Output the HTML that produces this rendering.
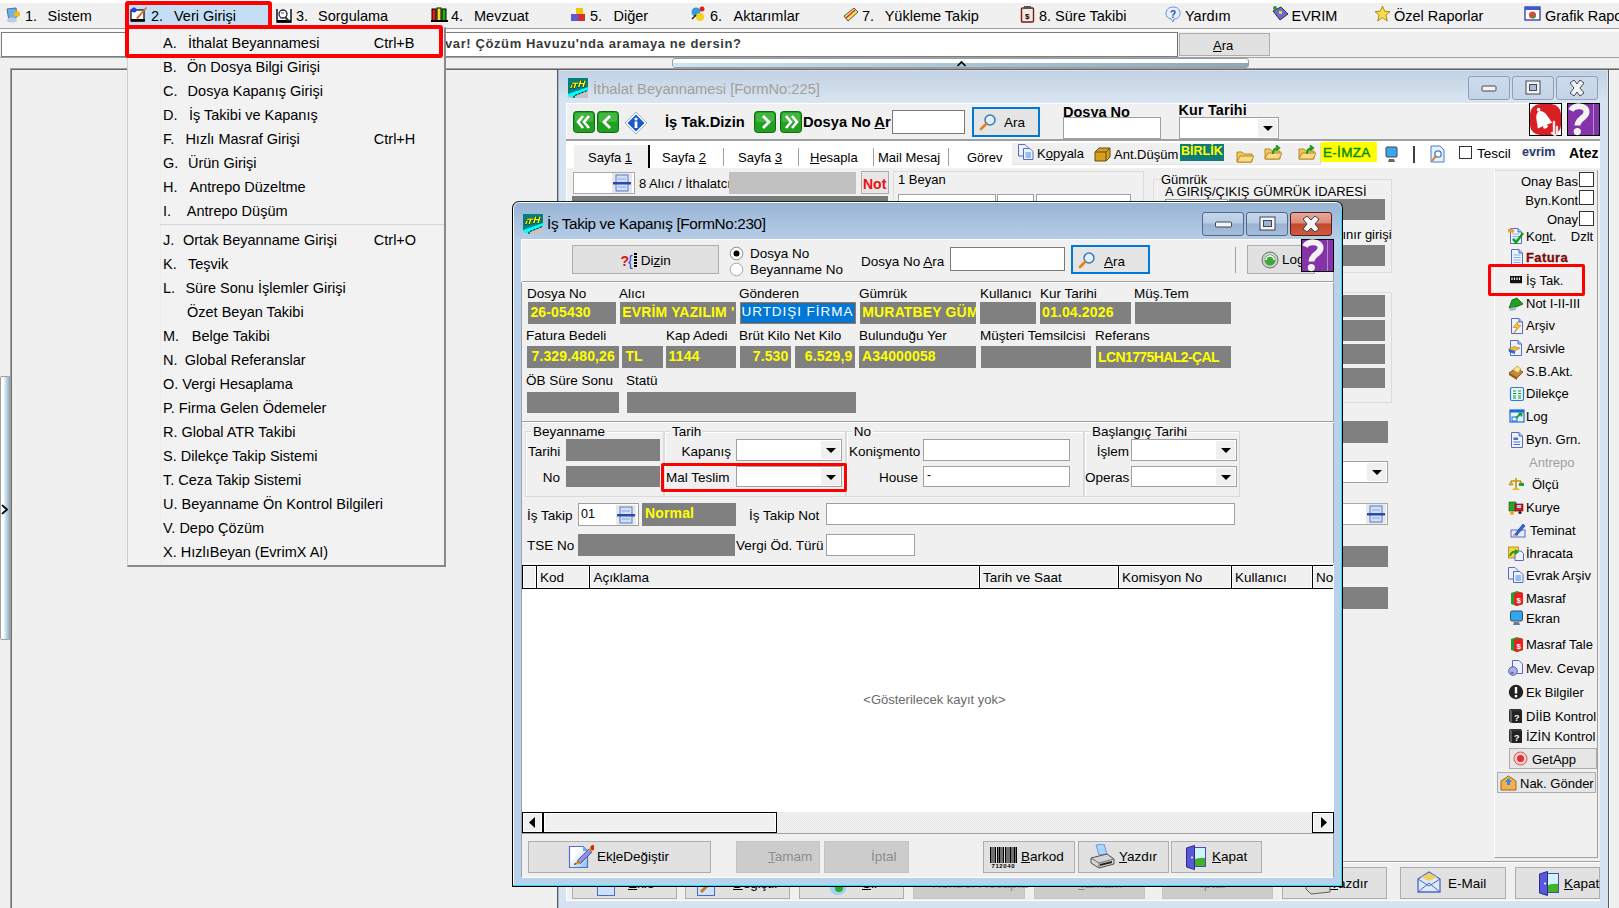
<!DOCTYPE html>
<html><head><meta charset="utf-8">
<style>
*{margin:0;padding:0;box-sizing:border-box}
html,body{width:1619px;height:908px;overflow:hidden;background:#f0f0f0;font-family:"Liberation Sans",sans-serif;color:#000}
.a{position:absolute}
.t{position:absolute;white-space:nowrap;line-height:1}
.m{font-size:14.5px}
.s{font-size:13px}
.gf{position:absolute;background:#808080}
.yb{position:absolute;white-space:nowrap;line-height:1;color:#ffff00;font-weight:bold;font-size:13px}
.in{position:absolute;background:#fff;border:1px solid #7a7a7a}
.btn{position:absolute;background:#e1e1e1;border:1px solid #adadad}
.red{position:absolute;border:4px solid #ff0000;border-radius:3px}
u{text-decoration:underline}
</style></head><body>
<!-- ===== MENU BAR ===== -->
<div class="a" style="left:0;top:0;width:1619px;height:3px;background:#ffffff"></div>
<div class="a" style="left:0;top:28px;width:1619px;height:1px;background:#a0a0a0"></div>
<div class="a" style="left:0;top:29px;width:1619px;height:3px;background:#fafafa"></div>
<div class="a" style="left:128px;top:5px;width:140px;height:20px;background:#c4dff5"></div>
<svg class="a" style="left:5px;top:7px" width="16" height="16"><path d="M2 2 L11 1 L12 10 L4 14 Z" fill="#6fb0e8" stroke="#4a6fa0" stroke-width="1"/><ellipse cx="7" cy="13" rx="5" ry="2.5" fill="#c0c8e8"/><circle cx="12" cy="7" r="3" fill="#f7b81a"/></svg>
<div class="t" style="left:25px;top:9.23px;font-size:14.5px;">1.</div>
<div class="t" style="left:47.5px;top:9.23px;font-size:14.5px;">Sistem</div>
<svg class="a" style="left:130px;top:6px" width="18" height="17"><rect x="1" y="4" width="13" height="11" fill="#fff" stroke="#000" stroke-width="1.2"/><rect x="1" y="13" width="14" height="2.5" fill="#000"/><circle cx="4" cy="4" r="2.5" fill="#2244dd"/><path d="M6 12 L16 1 L17 2 L8 13 Z" fill="#d86a2a"/></svg>
<div class="t" style="left:151px;top:9.23px;font-size:14.5px;">2.</div>
<div class="t" style="left:174px;top:9.23px;font-size:14.5px;">Veri Girişi</div>
<svg class="a" style="left:276px;top:7px" width="16" height="16"><path d="M1 2 V15 H15 V2" fill="#fff" stroke="#000" stroke-width="1.4"/><rect x="1" y="13" width="14" height="2.5" fill="#000"/><circle cx="7" cy="7" r="4" fill="none" stroke="#222" stroke-width="1.3"/><path d="M9 10 L13 14" stroke="#333" stroke-width="2"/><path d="M5 6 h3 M4 11 h4" stroke="#7a2bd0" stroke-width="1.2"/></svg>
<div class="t" style="left:296px;top:9.23px;font-size:14.5px;">3.</div>
<div class="t" style="left:318px;top:9.23px;font-size:14.5px;">Sorgulama</div>
<svg class="a" style="left:431px;top:6px" width="17" height="17"><rect x="1" y="3" width="4" height="12" fill="#e02020" stroke="#000" stroke-width="1"/><rect x="6" y="2" width="4" height="13" fill="#f0e020" stroke="#000" stroke-width="1"/><rect x="11" y="3" width="4" height="12" fill="#20b020" stroke="#000" stroke-width="1"/><rect x="0" y="14" width="17" height="2" fill="#000"/></svg>
<div class="t" style="left:451px;top:9.23px;font-size:14.5px;">4.</div>
<div class="t" style="left:474px;top:9.23px;font-size:14.5px;">Mevzuat</div>
<svg class="a" style="left:570px;top:6px" width="16" height="17"><rect x="6" y="2" width="7" height="7" fill="#f5c400"/><rect x="1" y="8" width="7" height="7" fill="#5b5bd6"/><rect x="8" y="8" width="7" height="7" fill="#d03030"/></svg>
<div class="t" style="left:590px;top:9.23px;font-size:14.5px;">5.</div>
<div class="t" style="left:613.5px;top:9.23px;font-size:14.5px;">Diğer</div>
<svg class="a" style="left:690px;top:5px" width="16" height="18"><circle cx="6" cy="7" r="4.5" fill="#3a9ad9"/><circle cx="10" cy="12" r="4" fill="#f2d31b"/><circle cx="12" cy="4" r="2.5" fill="#e02020"/><path d="M2 14 L6 10" stroke="#222" stroke-width="1.5"/></svg>
<div class="t" style="left:710px;top:9.23px;font-size:14.5px;">6.</div>
<div class="t" style="left:733.5px;top:9.23px;font-size:14.5px;">Aktarımlar</div>
<svg class="a" style="left:842px;top:6px" width="17" height="17"><path d="M2 10 L12 2 L16 6 L6 15 Z" fill="#f0e060" stroke="#555" stroke-width="1"/><path d="M4 12 L13 4" stroke="#e03030" stroke-width="1.5"/></svg>
<div class="t" style="left:862px;top:9.23px;font-size:14.5px;">7.</div>
<div class="t" style="left:884.7px;top:9.23px;font-size:14.5px;">Yükleme Takip</div>
<svg class="a" style="left:1020px;top:5px" width="15" height="18"><rect x="1.5" y="3" width="12" height="14" rx="1" fill="#f4e9e0" stroke="#7a1a1a" stroke-width="1.4"/><rect x="4" y="1" width="7" height="3" fill="#555"/><text x="5" y="14" font-size="8" font-family="Liberation Sans" font-weight="bold">$</text></svg>
<div class="t" style="left:1039px;top:9.23px;font-size:14.5px;">8. Süre Takibi</div>
<svg class="a" style="left:1165px;top:6px" width="16" height="17"><path d="M8 1 C13 1 15 4 15 7.5 C15 11 12 13 9 13 L8 16 L6 13 C3 12.5 1 10.5 1 7.5 C1 4 3.5 1 8 1Z" fill="#e6f0fc" stroke="#6a8fd0" stroke-width="1"/><text x="5" y="11.5" font-size="10" font-weight="bold" fill="#1a4ab8" font-family="Liberation Sans">?</text></svg>
<div class="t" style="left:1185px;top:9.23px;font-size:14.5px;">Yardım</div>
<svg class="a" style="left:1271px;top:5px" width="18" height="18"><path d="M2 6 L10 2 L17 9 L9 15 Z" fill="#6a6ad8" stroke="#333" stroke-width="1"/><circle cx="4" cy="3" r="2" fill="#2a9a2a"/><rect x="8" y="6" width="3" height="3" fill="#f2d31b"/></svg>
<div class="t" style="left:1291.5px;top:9.23px;font-size:14.5px;">EVRIM</div>
<svg class="a" style="left:1374px;top:5px" width="17" height="17"><path d="M8.5 1 L10.7 6.3 L16 6.6 L11.8 10 L13.3 16 L8.5 12.6 L3.7 16 L5.2 10 L1 6.6 L6.3 6.3 Z" fill="#f9e04a" stroke="#b08a10" stroke-width="1"/></svg>
<div class="t" style="left:1394px;top:9.23px;font-size:14.5px;">Özel Raporlar</div>
<svg class="a" style="left:1524px;top:6px" width="17" height="16"><rect x="1" y="1" width="15" height="13" fill="#fff" stroke="#2a3aa0" stroke-width="1.3"/><rect x="1" y="1" width="15" height="3" fill="#3a5ad0"/><circle cx="8.5" cy="9" r="3.5" fill="#e84040"/><path d="M8.5 9 L12 9 A3.5 3.5 0 0 1 8.5 12.5Z" fill="#30a030"/></svg>
<div class="t" style="left:1545px;top:9.23px;font-size:14.5px;">Grafik Raporlar</div>
<div class="red" style="left:125px;top:1px;width:147px;height:28px"></div>
<!-- ===== SEARCH ROW ===== -->
<div class="a" style="left:1px;top:32px;width:1177px;height:25px;background:#fff;border:1px solid #7d7d7d;border-right-color:#6d6d6d"></div>
<div class="t" style="left:445px;top:37px;font-size:13px;font-weight:bold;color:#3a3a3a;letter-spacing:0.6px">var! Çözüm Havuzu'nda aramaya ne dersin?</div>
<div class="btn" style="left:1179px;top:33px;width:91px;height:23px"></div>
<div class="t s" style="left:1213px;top:39px"><u>A</u>ra</div>
<div class="a" style="left:0;top:57px;width:1619px;height:1px;background:#a0a0a0"></div>
<!-- splitter -->
<div class="a" style="left:672px;top:58px;width:577px;height:10px;border:1px solid #9c9c9c;border-radius:3px;background:#fff"></div>
<div class="a" style="left:673px;top:63px;width:575px;height:4px;background:linear-gradient(90deg,#cde4f2,#a9c4d4 50%,#8ea8b8)"></div>
<svg class="a" style="left:956px;top:60px" width="11" height="7"><path d="M1.5 6 L5.5 2 L9.5 6" stroke="#000" stroke-width="1.6" fill="none"/></svg>
<div class="a" style="left:10px;top:68px;width:1609px;height:1px;background:#a0a0a0"></div>
<div class="a" style="left:10px;top:69px;width:1609px;height:1px;background:#686868"></div>
<!-- left panel -->
<div class="a" style="left:10px;top:69px;width:1px;height:839px;background:#a0a0a0"></div>
<div class="a" style="left:11px;top:69px;width:1px;height:839px;background:#6e6e6e"></div>
<!-- collapsed left strip -->
<div class="a" style="left:0;top:376px;width:11px;height:264px;border:1px solid #a0a0a0;border-right-width:2px;border-radius:2px;background:linear-gradient(90deg,#ffffff 0,#ffffff 40%,#d6ecf8 45%,#9ab8c8 100%)"></div>
<svg class="a" style="left:0;top:503px" width="10" height="13"><path d="M2.6 2.6 L7 6.5 L2.6 10.4" stroke="#000" stroke-width="1.9" fill="none" stroke-linecap="round"/></svg>
<!-- MDI left border -->
<div class="a" style="left:557px;top:69px;width:1px;height:839px;background:#5a5a5a"></div>
<div class="a" style="left:1608px;top:69px;width:1px;height:839px;background:#5a5a5a"></div>
<div class="a" style="left:1609px;top:70px;width:10px;height:838px;background:#f0f0f0;border-left:1px solid #fafafa"></div>

<div class="a" style="left:558px;top:70px;width:1050px;height:838px;background:#d6e3f0;border-left:1px solid #a9b9cb"></div>
<div class="a" style="left:559px;top:71px;width:1048px;height:32px;background:linear-gradient(#c2d2e3,#d9e5f1)"></div>
<svg class="a" style="left:568px;top:78px" width="20" height="20"><rect width="20" height="20" fill="#008080"/><path d="M0 16 L20 9 V13.5 L6 18 V20 H0Z" fill="#00ffff"/><path d="M6 20 V18 L20 12.5 V20Z" fill="#c4c4c4"/><path d="M0 18 L6 20 H0Z" fill="#d8c0c0"/><path d="M6 20 V17.8 L20 12.3" stroke="#000" stroke-width="1" fill="none" stroke-dasharray="2.2 1.2"/><g fill="#ffff00" stroke="#000" stroke-width="0.7" paint-order="stroke"><path d="M2 10 L3.5 6.5 L5 6.5 L3.5 10Z"/><path d="M4 4.5 H11 L10.5 5.8 H8.3 L7 10 H5.4 L6.7 5.8 H3.6Z"/><path d="M12 2.5 H13.6 L12.8 5 H15.5 L16.3 2.5 H17.9 L15.8 9 H14.2 L15 6.3 H12.3 L11.5 9 H9.9Z"/></g></svg>
<div class="t" style="left:593px;top:82.16px;font-size:14.7px;color:#a3a09b">İthalat Beyannamesi [FormNo:225]</div>
<div class="a" style="left:1468px;top:76px;width:42px;height:24px;background:linear-gradient(#cddbeb,#c4d4e6);border:1px solid #8f9fb8;border-radius:3px"></div><svg class="a" style="left:1479.0px;top:82.0px" width="20" height="12"><rect x="3" y="4" width="14" height="5" rx="1" fill="#f4f4f4" stroke="#404a5a" stroke-width="1"/></svg>
<div class="a" style="left:1512px;top:76px;width:42px;height:24px;background:linear-gradient(#cddbeb,#c4d4e6);border:1px solid #8f9fb8;border-radius:3px"></div><svg class="a" style="left:1523.0px;top:79.0px" width="20" height="18"><rect x="3" y="2" width="14" height="13" fill="#f4f4f4" stroke="#404a5a" stroke-width="1"/><rect x="6.5" y="5.5" width="7" height="6" fill="#a8bcd6" stroke="#404a5a" stroke-width="1"/></svg>
<div class="a" style="left:1556px;top:76px;width:42px;height:24px;background:linear-gradient(#cddbeb,#c4d4e6);border:1px solid #8f9fb8;border-radius:3px"></div><svg class="a" style="left:1567.0px;top:79.0px" width="20" height="18"><path d="M3 4 L7 1 L10 5 L13 1 L17 4 L13 9 L17 14 L13 17 L10 13 L7 17 L3 14 L7 9Z" fill="#f4f4f4" stroke="#404a5a" stroke-width="1" stroke-linejoin="round"/></svg>
<div class="a" style="left:566px;top:103px;width:1034px;height:798px;background:#f0f0f0;border-top:1px solid #ffffff;border-left:1px solid #ffffff;border-bottom:1px solid #ffffff"></div>
<svg class="a" style="left:573px;top:111px" width="22" height="22"><rect x="0.5" y="0.5" width="21" height="21" rx="3" fill="#22a022" stroke="#0c6a0c"/><rect x="2" y="2" width="18" height="9" rx="2" fill="#5cc85c" opacity="0.55"/><path d="M10 5 L5 11 L10 17 M16 5 L11 11 L16 17" stroke="#fff" stroke-width="2.6" fill="none"/></svg>
<svg class="a" style="left:597px;top:111px" width="22" height="22"><rect x="0.5" y="0.5" width="21" height="21" rx="3" fill="#22a022" stroke="#0c6a0c"/><rect x="2" y="2" width="18" height="9" rx="2" fill="#5cc85c" opacity="0.55"/><path d="M13 5 L7 11 L13 17" stroke="#fff" stroke-width="2.8" fill="none"/></svg>
<svg class="a" style="left:624px;top:111px" width="24" height="24"><path d="M12 1 L23 12 L12 23 L1 12Z" fill="#fff" stroke="#9ab0d8"/><path d="M12 3.5 L20.5 12 L12 20.5 L3.5 12Z" fill="#1a5ac8"/><circle cx="12" cy="8" r="1.6" fill="#fff"/><rect x="10.6" y="10.5" width="2.8" height="6.5" fill="#fff"/></svg>
<div class="t" style="left:665px;top:115.36px;font-size:14.7px;font-weight:bold">İş Tak.Dizin</div>
<svg class="a" style="left:754px;top:111px" width="22" height="22"><rect x="0.5" y="0.5" width="21" height="21" rx="3" fill="#22a022" stroke="#0c6a0c"/><rect x="2" y="2" width="18" height="9" rx="2" fill="#5cc85c" opacity="0.55"/><path d="M9 5 L15 11 L9 17" stroke="#fff" stroke-width="2.8" fill="none"/></svg>
<svg class="a" style="left:780px;top:111px" width="22" height="22"><rect x="0.5" y="0.5" width="21" height="21" rx="3" fill="#22a022" stroke="#0c6a0c"/><rect x="2" y="2" width="18" height="9" rx="2" fill="#5cc85c" opacity="0.55"/><path d="M6 5 L11 11 L6 17 M12 5 L17 11 L12 17" stroke="#fff" stroke-width="2.6" fill="none"/></svg>
<div class="t" style="left:803px;top:115.36px;font-size:14.7px;font-weight:bold">Dosya No <u>A</u>r</div>
<div class="a" style="left:892px;top:110px;width:73px;height:24px;background:#fff;border:1px solid #7a7a7a;"></div>
<div class="a" style="left:972px;top:107px;width:68px;height:30px;background:#e5e5e5;border:2px solid #0078d7"></div>
<svg class="a" style="left:979px;top:113px" width="18" height="18"><circle cx="11" cy="7" r="5" fill="#dff0ff" stroke="#3a78b8" stroke-width="1.5"/><path d="M7.5 10.5 L2 16" stroke="#e08020" stroke-width="2.6" stroke-linecap="round"/></svg>
<div class="t" style="left:1004px;top:115.57px;font-size:13.5px;">Ara</div>
<div class="t" style="left:1063px;top:105.23px;font-size:14.5px;font-weight:bold">Dosya No</div>
<div class="a" style="left:1063px;top:117px;width:98px;height:22px;background:#fff;border:1px solid #7a7a7a;border-color:#a0a0a0"></div>
<div class="t" style="left:1178.5px;top:103.20px;font-size:14.3px;font-weight:bold;letter-spacing:0.2px">Kur Tarihi</div>
<div class="a" style="left:1179px;top:117px;width:100px;height:22px;background:#fff;border:1px solid #7a7a7a;border-color:#a0a0a0"></div><div class="a" style="left:1258px;top:119px;width:19px;height:18px;background:#f0f0f0"></div><svg class="a" style="left:1261.5px;top:125.0px" width="12" height="7"><path d="M1 1 H11 L6 6Z" fill="#000"/></svg>
<svg class="a" style="left:1529px;top:103px" width="33" height="33"><rect x="0.5" y="0.5" width="32" height="32" fill="#fff" stroke="#000"/><rect x="1" y="1" width="31" height="31" rx="10" fill="#d82024"/><g transform="rotate(-22 13 15)"><path d="M5 23 C7.5 19 6 9 13 7.5 C20 9 18.5 19 21 23Z" fill="#fff"/><circle cx="13" cy="6" r="1.8" fill="#fff"/><ellipse cx="13" cy="24.5" rx="2.6" ry="1.6" fill="#fff"/></g><path d="M25 19 V30 M28 24 V31 M23 30 L26 32" stroke="#f6e4e4" stroke-width="2.4" stroke-linecap="round"/></svg>
<svg class="a" style="left:1567px;top:103px" width="33" height="33"><rect x="0.5" y="0.5" width="32" height="32" fill="#8434a8" stroke="#000"/><path d="M26.5 1 V32" stroke="#b58ad0" stroke-width="1"/><path d="M4 7.5 C6.5 2 19.5 1.5 19.5 9 C19.5 15 10.5 15.5 10.5 22.5" stroke="#f2f2f2" stroke-width="6" fill="none"/><circle cx="10.3" cy="28.6" r="3.6" fill="#f2f2f2"/></svg>
<div class="a" style="left:566px;top:139px;width:1034px;height:2px;background:#a0a0a0"></div>
<div class="a" style="left:567px;top:141px;width:1033px;height:27px;background:#ffffff"></div>
<div class="a" style="left:574px;top:145px;width:75px;height:23px;background:#f0f0f0"></div>
<div class="a" style="left:648px;top:145px;width:2px;height:23px;background:#000"></div>
<div class="a" style="left:723px;top:148px;width:1px;height:18px;background:#a0a0a0"></div>
<div class="a" style="left:798px;top:148px;width:1px;height:18px;background:#a0a0a0"></div>
<div class="a" style="left:873px;top:148px;width:1px;height:18px;background:#a0a0a0"></div>
<div class="a" style="left:948px;top:148px;width:1px;height:18px;background:#a0a0a0"></div>
<div class="t" style="left:588px;top:150.90px;font-size:13px;">Sayfa <u>1</u></div>
<div class="t" style="left:662px;top:150.90px;font-size:13px;">Sayfa <u>2</u></div>
<div class="t" style="left:738px;top:150.90px;font-size:13px;">Sayfa <u>3</u></div>
<div class="t" style="left:810px;top:150.90px;font-size:13px;"><u>H</u>esapla</div>
<div class="t" style="left:878px;top:150.90px;font-size:13px;">Mail Mesaj</div>
<div class="t" style="left:967px;top:150.90px;font-size:13px;">Görev</div>
<div class="a" style="left:1012px;top:143px;width:309px;height:22px;background:#f0f0f0;border-right:1px solid #dcdcdc;border-bottom:1px solid #e4e4e4"></div>
<svg class="a" style="left:1018px;top:144px" width="16" height="16"><path d="M0.5 0.5 H7 L10 3.5 V12 H0.5Z" fill="#eaf3ff" stroke="#5a6ac0"/><path d="M5.5 4.5 H12 L15 7.5 V15.5 H5.5Z" fill="#eaf3ff" stroke="#5a6ac0"/><path d="M7.5 9 H13 M7.5 11 H13 M7.5 13 H13" stroke="#3a8ae0"/></svg>
<div class="t" style="left:1037px;top:146.50px;font-size:13px;">K<u>o</u>pyala</div>
<svg class="a" style="left:1094px;top:147px" width="17" height="15"><path d="M1 5 L5 1 H16 V10 L12 14 H1Z" fill="#d4a020" stroke="#6a4a10"/><path d="M1 5 H12 V14 M12 5 L16 1" stroke="#6a4a10" fill="none"/></svg>
<div class="t" style="left:1114px;top:148.00px;font-size:13px;">Ant.Düşüm</div>
<div class="a" style="left:1180px;top:144px;width:44px;height:17px;background:#0e7a7a"></div>
<div class="t" style="left:1181px;top:145.42px;font-size:12.5px;font-weight:bold;color:#ffff00">BİRLİK</div>
<svg class="a" style="left:1236px;top:148px" width="18" height="16"><path d="M1 4 H6 L8 6 H16 V14 H1Z" fill="#f2c65a" stroke="#b88a20"/><path d="M1 14 L4 8 H18 L15 14Z" fill="#fadc88" stroke="#b88a20"/></svg>
<svg class="a" style="left:1264px;top:145px" width="18" height="16"><path d="M1 4 H6 L8 6 H16 V14 H1Z" fill="#f2c65a" stroke="#b88a20"/><path d="M1 14 L4 8 H18 L15 14Z" fill="#fadc88" stroke="#b88a20"/><path d="M9 9 C9 5 11 3 14 3 M12 0.5 L15 3 L12 5.5" stroke="#1a9a1a" stroke-width="2" fill="none"/></svg>
<svg class="a" style="left:1298px;top:145px" width="18" height="16"><path d="M1 4 H6 L8 6 H16 V14 H1Z" fill="#f2c65a" stroke="#b88a20"/><path d="M1 14 L4 8 H18 L15 14Z" fill="#fadc88" stroke="#b88a20"/><path d="M9 9 C9 5 11 3 14 3 M12 0.5 L15 3 L12 5.5" stroke="#1a9a1a" stroke-width="2" fill="none"/></svg>
<div class="a" style="left:1321px;top:142px;width:56px;height:20px;background:#ffff00"></div>
<div class="t" style="left:1323px;top:146.07px;font-size:13.5px;color:#0a8a0a;-webkit-text-stroke:0.4px #0a8a0a;letter-spacing:0.3px">E-İMZA</div>
<svg class="a" style="left:1385px;top:146px" width="13" height="17"><rect x="1" y="1" width="11" height="10" rx="1" fill="#3aa8ee" stroke="#444"/><path d="M4 13 H9 L10 16 H3Z" fill="#666"/></svg>
<div class="a" style="left:1413px;top:146px;width:2px;height:17px;background:#404040"></div>
<svg class="a" style="left:1430px;top:145px" width="15" height="18"><path d="M1 1 H10 L14 5 V17 H1Z" fill="#e8f0ff" stroke="#4a7ac8"/><circle cx="8" cy="9" r="3.2" fill="#fff" stroke="#4a7ac8" stroke-width="1.3"/><path d="M5.5 11.5 L2 16" stroke="#e07a20" stroke-width="2"/></svg>
<div class="a" style="left:1459px;top:146px;width:13px;height:13px;background:#fff;border:1px solid #333"></div>
<div class="t" style="left:1477px;top:146.57px;font-size:13.5px;">Tescil</div>
<div class="a" style="left:1520px;top:146px;width:37px;height:13px;background:#f8f8f8"></div>
<div class="t" style="left:1522px;top:145.92px;font-size:12.5px;font-weight:bold;color:#2a3a6a">evrim</div>
<div class="t" style="left:1569px;top:146.15px;font-size:14px;font-weight:bold">Atez</div>
<div class="a" style="left:573px;top:172px;width:62px;height:22px;background:#fff;border:1px solid #7a7a7a;border-color:#a8a8a8"></div>
<svg class="a" style="left:612px;top:173px" width="20" height="20"><rect x="0" y="0" width="20" height="20" fill="#e8e8e8"/><rect x="4" y="2" width="12" height="16" fill="#cfe0f8" stroke="#5a78c8" stroke-width="1"/><path d="M6 6 H14 M6 14 H14" stroke="#8aa6e0" stroke-width="1"/><rect x="1" y="9" width="18" height="2.5" fill="#2a4aa8"/></svg>
<div class="t" style="left:639px;top:176.80px;font-size:13px;">8 Alıcı / İthalatcı</div>
<div class="a" style="left:729px;top:172px;width:127px;height:22px;background:#c0c0c0"></div>
<div class="a" style="left:861px;top:171px;width:28px;height:23px;background:#e1e1e1;border:1px solid #adadad;background:#e6e6e6"></div>
<div class="t" style="left:863px;top:177.15px;font-size:14px;font-weight:bold;color:#ee1111">Not</div>
<div class="a" style="left:572px;top:196px;width:316px;height:8px;background:#7a7a7a"></div>
<div class="a" style="left:893px;top:171px;width:251px;height:33px;border:1px solid #dcdcdc;border-bottom:none"></div>
<div class="t" style="left:898px;top:172.50px;font-size:13px;">1 Beyan</div>
<div class="a" style="left:898px;top:194px;width:98px;height:16px;background:#fff;border:1px solid #7a7a7a;border-color:#a0a0a0"></div>
<div class="a" style="left:997px;top:194px;width:37px;height:16px;background:#fff;border:1px solid #7a7a7a;border-color:#a0a0a0"></div>
<div class="a" style="left:1036px;top:194px;width:95px;height:16px;background:#fff;border:1px solid #7a7a7a;border-color:#a0a0a0"></div>
<div class="a" style="left:1153px;top:179px;width:239px;height:94px;border:1px solid #dcdcdc"></div>
<div class="t" style="left:1161px;top:172.50px;font-size:13px;background:#f0f0f0;padding-right:2px">Gümrük</div>
<div class="t" style="left:1165px;top:185.00px;font-size:13px;">A GIRIŞ/ÇIKIŞ GÜMRÜK İDARESİ</div>
<div class="a" style="left:1165px;top:199px;width:63px;height:21px;background:#fff;border:1px solid #7a7a7a;border-color:#a0a0a0"></div>
<div class="a" style="left:1229px;top:199px;width:156px;height:21px;background:#808080"></div>
<div class="t" style="left:1336px;top:228.00px;font-size:13px;">sınır girişi</div>
<div class="a" style="left:1335px;top:245px;width:50px;height:21px;background:#808080"></div>
<div class="a" style="left:1335px;top:292px;width:57px;height:111px;border:1px solid #dcdcdc"></div>
<div class="a" style="left:1335px;top:295px;width:50px;height:22px;background:#808080"></div>
<div class="a" style="left:1335px;top:320px;width:50px;height:21px;background:#808080"></div>
<div class="a" style="left:1335px;top:344px;width:50px;height:20px;background:#808080"></div>
<div class="a" style="left:1335px;top:368px;width:50px;height:20px;background:#808080"></div>
<div class="a" style="left:1335px;top:421px;width:53px;height:22px;background:#808080"></div>
<div class="a" style="left:1300px;top:461px;width:88px;height:22px;background:#fff;border:1px solid #7a7a7a;border-color:#a0a0a0"></div><div class="a" style="left:1367px;top:463px;width:19px;height:18px;background:#f0f0f0"></div><svg class="a" style="left:1370.5px;top:469.0px" width="12" height="7"><path d="M1 1 H11 L6 6Z" fill="#000"/></svg>
<div class="a" style="left:1300px;top:503px;width:88px;height:22px;background:#fff;border:1px solid #7a7a7a;border-color:#a8a8a8"></div>
<svg class="a" style="left:1366px;top:504px" width="20" height="20"><rect x="0" y="0" width="20" height="20" fill="#e8e8e8"/><rect x="4" y="2" width="12" height="16" fill="#cfe0f8" stroke="#5a78c8" stroke-width="1"/><path d="M6 6 H14 M6 14 H14" stroke="#8aa6e0" stroke-width="1"/><rect x="1" y="9" width="18" height="2.5" fill="#2a4aa8"/></svg>
<div class="a" style="left:1335px;top:546px;width:53px;height:21px;background:#808080"></div>
<div class="a" style="left:1335px;top:587px;width:53px;height:22px;background:#808080"></div>
<div class="a" style="left:1494px;top:170px;width:104px;height:688px;border-left:1px solid #ffffff;border-top:1px solid #dcdcdc;border-bottom:1px solid #a0a0a0;border-right:1px solid #a0a0a0"></div>
<div class="t" style="right:41px;top:175.40px;font-size:13px;">Onay Bas</div>
<div class="a" style="left:1579px;top:172px;width:15px;height:15px;background:#fff;border:1px solid #333"></div>
<div class="t" style="right:41px;top:193.60px;font-size:13px;">Byn.Kont</div>
<div class="a" style="left:1579px;top:190px;width:15px;height:15px;background:#fff;border:1px solid #333"></div>
<div class="t" style="right:41px;top:213.40px;font-size:13px;">Onay</div>
<div class="a" style="left:1579px;top:211px;width:15px;height:15px;background:#fff;border:1px solid #333"></div>
<svg class="a" style="left:1508px;top:228px" width="16" height="16"><path d="M2.5 0.5 H10 L13.5 4 V15.5 H2.5Z" fill="#eaf3ff" stroke="#5a6ac0"/><path d="M10 0.5 V4 H13.5" fill="#9cc8f0" stroke="#5a6ac0"/><path d="M4.5 6 H11 M4.5 8.5 H11 M4.5 11 H9" stroke="#8ab0e0"/><path d="M5 11 L8 14.5 L15 5" stroke="#10a010" stroke-width="2.4" fill="none"/><path d="M0 1 L4 1 L4 0 L6.5 3 L4 6 V4.5 H0Z" fill="#f0a030"/></svg>
<div class="t" style="left:1526px;top:230.00px;font-size:13px;">Ko<u>n</u>t. &nbsp;&nbsp;&nbsp;Dzlt</div>
<svg class="a" style="left:1509px;top:249px" width="16" height="16"><path d="M2.5 0.5 H10 L13.5 4 V15.5 H2.5Z" fill="#eaf3ff" stroke="#5a6ac0"/><path d="M10 0.5 V4 H13.5" fill="#9cc8f0" stroke="#5a6ac0"/><path d="M4.5 6 H11.5 M4.5 8.5 H11.5 M4.5 11 H11.5 M4.5 13.5 H11.5" stroke="#8ab0e0"/></svg>
<div class="t" style="left:1526px;top:250.70px;font-size:13px;font-weight:bold;color:#7a0a0a;letter-spacing:0.4px;-webkit-text-stroke:0.3px #7a0a0a">Fatura</div>
<svg class="a" style="left:1509px;top:272px" width="16" height="16"><rect x="1" y="4" width="12" height="7" fill="#111"/><path d="M3 5.5 V8 M5.5 5.5 V8 M8 5.5 V8 M10.5 5.5 V8" stroke="#fff" stroke-width="1.2"/><path d="M2 11.5 H13" stroke="#bbb"/></svg>
<div class="t" style="left:1526px;top:273.80px;font-size:13px;">İş Tak.</div>
<svg class="a" style="left:1508px;top:296px" width="16" height="16"><path d="M1 12 L4 4 L9 2 L15 8 L8 11Z" fill="#20a020" stroke="#0a5a0a" stroke-width="0.8"/><path d="M1 12 L2 15 L8 14 L8 11Z" fill="#a0b8d0"/></svg>
<div class="t" style="left:1526px;top:297.00px;font-size:13px;">Not I-II-III</div>
<svg class="a" style="left:1509px;top:318px" width="16" height="16"><path d="M2.5 0.5 H10 L13.5 4 V15.5 H2.5Z" fill="#eaf3ff" stroke="#5a6ac0"/><path d="M10 0.5 V4 H13.5" fill="#9cc8f0" stroke="#5a6ac0"/><path d="M9.5 3 L4 9.5 H8 L5 15 L12 7.5 H8.5Z" fill="#f8d020" stroke="#d07010" stroke-width="0.6"/></svg>
<div class="t" style="left:1526px;top:319.00px;font-size:13px;">Arşiv</div>
<svg class="a" style="left:1508px;top:340px" width="16" height="16"><path d="M2.5 0.5 H10 L13.5 4 V15.5 H2.5Z" fill="#eaf3ff" stroke="#5a6ac0"/><path d="M10 0.5 V4 H13.5" fill="#9cc8f0" stroke="#5a6ac0"/><path d="M0.5 9 L6 6.5 L12 8 L7 11Z" fill="#f4c030" stroke="#b08010" stroke-width="0.6"/><path d="M0.5 9 L7 11 V14 L1 12Z" fill="#2a6ad0"/></svg>
<div class="t" style="left:1526px;top:342.00px;font-size:13px;">Arsivle</div>
<svg class="a" style="left:1508px;top:364px" width="16" height="16"><path d="M1 9 L8 4 L15 8 L9 14Z" fill="#c88a30" stroke="#6a4010" stroke-width="0.8"/><path d="M5 6 L9 2 L13 5 L10 9Z" fill="#f8e890" stroke="#a08020" stroke-width="0.6"/><path d="M1 9 L9 14 V16 L1 11Z" fill="#8a5a20"/></svg>
<div class="t" style="left:1526px;top:365.00px;font-size:13px;">S.B.Akt.</div>
<svg class="a" style="left:1509px;top:386px" width="16" height="16"><rect x="1.5" y="1.5" width="13" height="13" rx="1.5" fill="#e8f4ff" stroke="#2a7ae0" stroke-width="1.2"/><path d="M4 5 H7 M9 5 H12 M4 7.5 H7 M9 7.5 H12 M4 10 H7 M9 10 H12 M4 12 H7 M9 12 H12" stroke="#10a010" stroke-width="1.1"/></svg>
<div class="t" style="left:1526px;top:387.40px;font-size:13px;">Dilekçe</div>
<svg class="a" style="left:1509px;top:408px" width="16" height="16"><rect x="1" y="2" width="14" height="12" fill="#e8f4ff" stroke="#1a6ae0" stroke-width="1.2"/><rect x="1" y="2" width="14" height="2.5" fill="#1a6ae0"/><rect x="3" y="9" width="5" height="4" fill="none" stroke="#1a6ae0"/><path d="M7 10 L12 5.5 M9.5 5.5 H12.5 V8.5" stroke="#10a030" stroke-width="1.8" fill="none"/></svg>
<div class="t" style="left:1526px;top:410.00px;font-size:13px;">Log</div>
<svg class="a" style="left:1509px;top:432px" width="16" height="16"><path d="M2.5 0.5 H10 L13.5 4 V15.5 H2.5Z" fill="#eaf3ff" stroke="#5a6ac0"/><path d="M10 0.5 V4 H13.5" fill="#9cc8f0" stroke="#5a6ac0"/><path d="M4.5 5.5 H9 V8 H4.5Z" fill="#5a6ac0"/><path d="M4.5 10 H11 M4.5 12.5 H11" stroke="#5a6ac0"/></svg>
<div class="t" style="left:1526px;top:433.00px;font-size:13px;">Byn. Grn.</div>
<div class="t" style="left:1529px;top:456.00px;font-size:13px;color:#a0a0a0">Antrepo</div>
<svg class="a" style="left:1508px;top:476px" width="16" height="16"><path d="M8 2 V13 M3 5 H13" stroke="#c89010" stroke-width="1.6"/><path d="M1 9 L3 5 L5 9Z M11 9 L13 5 L15 9Z" fill="#e8b830" stroke="#a07010" stroke-width="0.6"/><path d="M4 14 H12 L10 12 H6Z" fill="#e8b830"/><rect x="11" y="7" width="5" height="3" fill="#20a020"/></svg>
<div class="t" style="left:1532px;top:478.00px;font-size:13px;">Ölçü</div>
<svg class="a" style="left:1508px;top:499px" width="16" height="16"><rect x="1" y="3" width="7" height="9" fill="#30a030" stroke="#0a5a0a" stroke-width="0.6"/><rect x="7" y="5" width="8" height="7" fill="#d82020" stroke="#600" stroke-width="0.6"/><rect x="9" y="6" width="4" height="3" fill="#a0d0ff"/><circle cx="4" cy="14" r="2" fill="#f0a020"/><circle cx="12" cy="13.5" r="1.6" fill="#222"/></svg>
<div class="t" style="left:1526px;top:500.50px;font-size:13px;">Kurye</div>
<svg class="a" style="left:1510px;top:522px" width="16" height="16"><rect x="1" y="8" width="14" height="7" fill="#e0ecff" stroke="#5a6ac0"/><path d="M3 13 H8" stroke="#e04040"/><path d="M5 12 L13 2 L15 4 L7 13Z" fill="#2a6ae0" stroke="#0a2a80" stroke-width="0.6"/></svg>
<div class="t" style="left:1530px;top:523.50px;font-size:13px;">Teminat</div>
<svg class="a" style="left:1508px;top:545px" width="16" height="16"><rect x="0.5" y="2" width="10" height="11" fill="#f8d040" stroke="#b08010" stroke-width="0.8"/><path d="M7 6 H13 L15.5 8.5 V15.5 H7Z" fill="#eaf3ff" stroke="#5a6ac0"/><path d="M2 11 C3 7 6 6 9 7 M7 5 L9.5 7 L7 9" stroke="#10a010" stroke-width="1.8" fill="none"/></svg>
<div class="t" style="left:1526px;top:546.50px;font-size:13px;">İhracata</div>
<svg class="a" style="left:1508px;top:567px" width="16" height="16"><path d="M0.5 0.5 H7 L10 3.5 V12 H0.5Z" fill="#eaf3ff" stroke="#5a6ac0"/><path d="M5.5 4.5 H12 L15 7.5 V15.5 H5.5Z" fill="#eaf3ff" stroke="#5a6ac0"/><path d="M7.5 9 H13 M7.5 11 H13 M7.5 13 H13" stroke="#3a8ae0"/></svg>
<div class="t" style="left:1526px;top:568.50px;font-size:13px;">Evrak Arşiv</div>
<svg class="a" style="left:1509px;top:590px" width="16" height="16"><path d="M2 3 L8 1 L14 3 V14 L8 16 L2 14Z" fill="#20a030"/><path d="M5 3.5 L11 2 L14 3 V14 L8 16 L5 15Z" fill="#e82020"/><text x="7.5" y="12.5" font-family="Liberation Sans" font-size="8" font-weight="bold" fill="#fff">$</text></svg>
<div class="t" style="left:1526px;top:591.50px;font-size:13px;">Masraf</div>
<svg class="a" style="left:1509px;top:610px" width="16" height="16"><rect x="1.5" y="1" width="12" height="10" rx="1.5" fill="#30a8f0" stroke="#404a5a"/><path d="M5 12 H10 L11 15 H4Z" fill="#707a8a"/></svg>
<div class="t" style="left:1526px;top:611.50px;font-size:13px;">Ekran</div>
<svg class="a" style="left:1509px;top:636px" width="16" height="16"><path d="M2 3 L8 1 L14 3 V14 L8 16 L2 14Z" fill="#20a030"/><path d="M5 3.5 L11 2 L14 3 V14 L8 16 L5 15Z" fill="#e82020"/><text x="7.5" y="12.5" font-family="Liberation Sans" font-size="8" font-weight="bold" fill="#fff">$</text></svg>
<div class="t" style="left:1526px;top:637.50px;font-size:13px;">Masraf Tale</div>
<svg class="a" style="left:1508px;top:660px" width="16" height="16"><path d="M4.5 0.5 H11 L14.5 4 V13.5 H4.5Z" fill="#eaf3ff" stroke="#5a6ac0"/><circle cx="5" cy="11" r="4.3" fill="#b0b0e8" stroke="#5a5ab0"/><text x="2.5" y="13.5" font-family="Liberation Sans" font-size="6" font-weight="bold" fill="#3a3a90">»</text></svg>
<div class="t" style="left:1526px;top:661.50px;font-size:13px;">Mev. Cevap</div>
<svg class="a" style="left:1508px;top:684px" width="16" height="16"><circle cx="8" cy="8" r="7.2" fill="#222"/><rect x="6.8" y="3" width="2.4" height="6.5" fill="#fff"/><rect x="6.8" y="11" width="2.4" height="2.4" fill="#fff"/></svg>
<div class="t" style="left:1526px;top:685.50px;font-size:13px;">Ek Bilgiler</div>
<svg class="a" style="left:1508px;top:708px" width="16" height="16"><path d="M1 1 H13 L14 3 V15 H3 L1 13Z" fill="#333"/><path d="M1 1 L3 3 V15" stroke="#888" fill="none"/><rect x="4" y="3.5" width="10" height="11" fill="#222"/><text x="6" y="13" font-family="Liberation Sans" font-size="9" font-weight="bold" fill="#fff">?</text></svg>
<div class="t" style="left:1526px;top:709.50px;font-size:13px;">DİİB Kontrol</div>
<svg class="a" style="left:1508px;top:728px" width="16" height="16"><path d="M1 1 H13 L14 3 V15 H3 L1 13Z" fill="#333"/><path d="M1 1 L3 3 V15" stroke="#888" fill="none"/><rect x="4" y="3.5" width="10" height="11" fill="#222"/><text x="6" y="13" font-family="Liberation Sans" font-size="9" font-weight="bold" fill="#fff">?</text></svg>
<div class="t" style="left:1526px;top:729.50px;font-size:13px;">İZİN Kontrol</div>
<div class="a" style="left:1488px;top:264px;width:97px;height:32px;border:3px solid #ff0000;border-radius:2px"></div>
<div class="a" style="left:1509px;top:748px;width:88px;height:21px;background:#e1e1e1;border:1px solid #adadad;background:#e6e6e6"></div>
<svg class="a" style="left:1513px;top:751px" width="15" height="15"><circle cx="7.5" cy="7.5" r="6.5" fill="#f8d0d0" stroke="#e05050"/><circle cx="7.5" cy="7.5" r="3.5" fill="#e03030"/></svg>
<div class="t" style="left:1532px;top:752.50px;font-size:13px;">GetApp</div>
<div class="a" style="left:1497px;top:772px;width:99px;height:21px;background:#e1e1e1;border:1px solid #adadad;background:#e6e6e6"></div>
<svg class="a" style="left:1500px;top:774px" width="17" height="17"><path d="M1 7 L8.5 2 L16 7 V16 H1Z" fill="#f2b050" stroke="#a06a10"/><path d="M5 8 L8.5 4 L12 8 H10 V11 H7 V8Z" fill="#3a8ae0"/></svg>
<div class="t" style="left:1520px;top:777.00px;font-size:13px;">Nak. Gönder</div>
<div class="a" style="left:566px;top:861px;width:1034px;height:1px;background:#a0a0a0"></div>
<div class="a" style="left:566px;top:862px;width:1034px;height:1px;background:#ffffff"></div>
<div class="a" style="left:572px;top:867px;width:105px;height:32px;background:#e1e1e1;border:1px solid #adadad;"></div>
<div class="a" style="left:685px;top:867px;width:105px;height:32px;background:#e1e1e1;border:1px solid #adadad;"></div>
<div class="a" style="left:799px;top:867px;width:105px;height:32px;background:#e1e1e1;border:1px solid #adadad;"></div>
<div class="a" style="left:913px;top:867px;width:112px;height:32px;background:#e1e1e1;border:1px solid #adadad;background:#cccccc;border-color:#c4c4c4"></div>
<div class="a" style="left:1034px;top:867px;width:111px;height:32px;background:#e1e1e1;border:1px solid #adadad;background:#cccccc;border-color:#c4c4c4"></div>
<div class="a" style="left:1162px;top:867px;width:111px;height:32px;background:#e1e1e1;border:1px solid #adadad;background:#cccccc;border-color:#c4c4c4"></div>
<div class="a" style="left:1282px;top:867px;width:105px;height:32px;background:#e1e1e1;border:1px solid #adadad;"></div>
<div class="a" style="left:1400px;top:867px;width:106px;height:32px;background:#e1e1e1;border:1px solid #adadad;"></div>
<div class="a" style="left:1515px;top:867px;width:85px;height:32px;background:#e1e1e1;border:1px solid #adadad;"></div>
<svg class="a" style="left:1416px;top:870px" width="26" height="24"><path d="M2 9 L13 2 L24 9 V22 H2Z" fill="#dbe9fb" stroke="#4a6ac0" stroke-width="1.3"/><path d="M2 22 L13 13 L24 22 M2 9 L13 16 L24 9" stroke="#4a6ac0" fill="none"/><path d="M5 7 L13 3 L21 7 L13 11Z" fill="#f2d060"/></svg>
<div class="t" style="left:1448px;top:876.57px;font-size:13.5px;">E-Mail</div>
<svg class="a" style="left:1539px;top:871px" width="21" height="25"><rect x="6.5" y="2.5" width="13" height="19" fill="#cff4ff" stroke="#4a4ab8"/><path d="M7 15 Q13 12 19 13 V21 H7Z" fill="#40b428"/><path d="M0.5 3 L8.5 0.5 V24.5 L0.5 22Z" fill="#5858d8" stroke="#2a2a90"/><circle cx="6" cy="12.5" r="1" fill="#fff"/></svg>
<div class="t" style="left:1564px;top:876.57px;font-size:13.5px;"><u>K</u>apat</div>
<div class="t" style="left:1330px;top:876.57px;font-size:13.5px;"><u>Y</u>azdır</div>
<div class="a" style="left:566px;top:901px;width:1034px;height:7px;background:#d6e3f0"></div>
<svg class="a" style="left:597px;top:880px" width="18" height="16"><rect x="0.5" y="0.5" width="17" height="15" fill="#cfe2fb" stroke="#4a6ac8"/></svg>
<div class="t" style="left:628px;top:876.57px;font-size:13.5px;"><u>E</u>kle</div>
<svg class="a" style="left:697px;top:880px" width="18" height="16"><rect x="0.5" y="0.5" width="17" height="15" fill="#cfe2fb" stroke="#4a6ac8"/><path d="M4 12 L14 2" stroke="#c07a20" stroke-width="3"/></svg>
<div class="t" style="left:733px;top:876.57px;font-size:13.5px;"><u>D</u>eğiştir</div>
<svg class="a" style="left:829px;top:880px" width="18" height="16"><ellipse cx="9" cy="8" rx="8" ry="7" fill="#9fd0f0"/><circle cx="10" cy="8" r="4" fill="#2aa82a"/></svg>
<div class="t" style="left:862px;top:876.57px;font-size:13.5px;"><u>S</u>il</div>
<div class="t" style="left:932px;top:876.57px;font-size:13.5px;color:#8c8c8c">Kontrol Hesapla</div>
<div class="t" style="left:1078px;top:876.57px;font-size:13.5px;color:#8c8c8c"><u>T</u>amam</div>
<div class="t" style="left:1200px;top:876.57px;font-size:13.5px;color:#8c8c8c">İptal</div>
<svg class="a" style="left:1305px;top:872px" width="26" height="24"><path d="M9 1 L17 0 L19 9 L10 10Z" fill="#cfe6ff" stroke="#5a8ac8"/><path d="M2 11 L20 9 L25 15 L25 20 L6 22 L1 17Z" fill="#d8d8d8" stroke="#606060"/></svg>
<div class="a" style="left:1600px;top:103px;width:8px;height:805px;background:#d6e3f0"></div>
<div class="a" style="left:127px;top:27px;width:319px;height:540px;background:#f2f2f2;border:1px solid #cfcfcf;border-right:2px solid #8a8a8a;border-bottom:2px solid #8a8a8a"></div>
<div class="a" style="left:160px;top:28px;width:1px;height:537px;background:#ebebeb"></div>
<div class="a" style="left:160px;top:224px;width:284px;height:1px;background:#d5d5d5"></div>
<div class="t" style="left:163px;top:36.03px;font-size:14.5px;">A.</div>
<div class="t" style="left:188px;top:36.03px;font-size:14.5px;">İthalat Beyannamesi</div>
<div class="t" style="left:373.8px;top:36.03px;font-size:14.5px;">Ctrl+B</div>
<div class="t" style="left:163px;top:60.03px;font-size:14.5px;">B.</div>
<div class="t" style="left:187px;top:60.03px;font-size:14.5px;">Ön Dosya Bilgi Girişi</div>
<div class="t" style="left:163px;top:84.03px;font-size:14.5px;">C.</div>
<div class="t" style="left:187.6px;top:84.03px;font-size:14.5px;">Dosya Kapanış Girişi</div>
<div class="t" style="left:163px;top:108.03px;font-size:14.5px;">D.</div>
<div class="t" style="left:189px;top:108.03px;font-size:14.5px;">İş Takibi ve Kapanış</div>
<div class="t" style="left:163px;top:132.03px;font-size:14.5px;">F.</div>
<div class="t" style="left:185.4px;top:132.03px;font-size:14.5px;">Hızlı Masraf Girişi</div>
<div class="t" style="left:373.8px;top:132.03px;font-size:14.5px;">Ctrl+H</div>
<div class="t" style="left:163px;top:156.03px;font-size:14.5px;">G.</div>
<div class="t" style="left:188px;top:156.03px;font-size:14.5px;">Ürün Girişi</div>
<div class="t" style="left:163px;top:180.03px;font-size:14.5px;">H.</div>
<div class="t" style="left:189.5px;top:180.03px;font-size:14.5px;">Antrepo Düzeltme</div>
<div class="t" style="left:163px;top:204.03px;font-size:14.5px;">I.</div>
<div class="t" style="left:186.8px;top:204.03px;font-size:14.5px;">Antrepo Düşüm</div>
<div class="t" style="left:163px;top:233.43px;font-size:14.5px;">J.</div>
<div class="t" style="left:183px;top:233.43px;font-size:14.5px;">Ortak Beyanname Girişi</div>
<div class="t" style="left:373.8px;top:233.43px;font-size:14.5px;">Ctrl+O</div>
<div class="t" style="left:163px;top:257.43px;font-size:14.5px;">K.</div>
<div class="t" style="left:188px;top:257.43px;font-size:14.5px;">Teşvik</div>
<div class="t" style="left:163px;top:281.43px;font-size:14.5px;">L.</div>
<div class="t" style="left:185.4px;top:281.43px;font-size:14.5px;">Süre Sonu İşlemler Girişi</div>
<div class="t" style="left:187px;top:305.43px;font-size:14.5px;">Özet Beyan Takibi</div>
<div class="t" style="left:163px;top:329.43px;font-size:14.5px;">M.</div>
<div class="t" style="left:191.8px;top:329.43px;font-size:14.5px;">Belge Takibi</div>
<div class="t" style="left:163px;top:353.43px;font-size:14.5px;">N.</div>
<div class="t" style="left:184.8px;top:353.43px;font-size:14.5px;">Global Referanslar</div>
<div class="t" style="left:163px;top:377.43px;font-size:14.5px;">O. Vergi Hesaplama</div>
<div class="t" style="left:163px;top:401.43px;font-size:14.5px;">P. Firma Gelen Ödemeler</div>
<div class="t" style="left:163px;top:425.43px;font-size:14.5px;">R. Global ATR Takibi</div>
<div class="t" style="left:163px;top:449.43px;font-size:14.5px;">S. Dilekçe Takip Sistemi</div>
<div class="t" style="left:163px;top:473.43px;font-size:14.5px;">T. Ceza Takip Sistemi</div>
<div class="t" style="left:163px;top:497.43px;font-size:14.5px;">U. Beyanname Ön Kontrol Bilgileri</div>
<div class="t" style="left:163px;top:521.43px;font-size:14.5px;">V. Depo Çözüm</div>
<div class="t" style="left:163px;top:545.43px;font-size:14.5px;">X. HızlıBeyan (EvrimX AI)</div>
<div class="red" style="left:125px;top:25px;width:318px;height:33px"></div>
<div class="a" style="left:512px;top:201px;width:831px;height:686px;background:#b9d1ea;border:1px solid #000;border-top-color:#1e2630;border-radius:7px 7px 0 0;box-shadow:inset 1px 1px 0 #ffffff"></div>
<div class="a" style="left:513px;top:885px;width:829px;height:1px;background:#22e0f8"></div>
<div class="a" style="left:1341px;top:210px;width:1px;height:676px;background:#22e0f8"></div>
<div class="a" style="left:514px;top:203px;width:827px;height:36px;background:linear-gradient(#98b4d4,#b6cde8);border-radius:5px 5px 0 0"></div>
<div class="a" style="left:513px;top:240px;width:1px;height:645px;background:#ffffff"></div>
<svg class="a" style="left:523px;top:214px" width="20" height="20"><rect width="20" height="20" fill="#008080"/><path d="M0 16 L20 9 V13.5 L6 18 V20 H0Z" fill="#00ffff"/><path d="M6 20 V18 L20 12.5 V20Z" fill="#c4c4c4"/><path d="M0 18 L6 20 H0Z" fill="#d8c0c0"/><path d="M6 20 V17.8 L20 12.3" stroke="#000" stroke-width="1" fill="none" stroke-dasharray="2.2 1.2"/><g fill="#ffff00" stroke="#000" stroke-width="0.7" paint-order="stroke"><path d="M2 10 L3.5 6.5 L5 6.5 L3.5 10Z"/><path d="M4 4.5 H11 L10.5 5.8 H8.3 L7 10 H5.4 L6.7 5.8 H3.6Z"/><path d="M12 2.5 H13.6 L12.8 5 H15.5 L16.3 2.5 H17.9 L15.8 9 H14.2 L15 6.3 H12.3 L11.5 9 H9.9Z"/></g></svg>
<div class="t" style="left:547px;top:216.45px;font-size:15.3px;letter-spacing:-0.36px">İş Takip ve Kapanış [FormNo:230]</div>
<div class="a" style="left:1202px;top:212px;width:42px;height:24px;background:linear-gradient(#c4d6ec 0,#b8cce6 45%,#9cb3d3 50%,#a5bcd9 100%);border:1px solid #56688a;border-radius:3px"></div><svg class="a" style="left:1213.0px;top:218.0px" width="20" height="12"><rect x="2.5" y="4" width="16" height="5" rx="1" fill="#f6f6f6" stroke="#3a4658" stroke-width="1"/></svg>
<div class="a" style="left:1246px;top:212px;width:42px;height:24px;background:linear-gradient(#c4d6ec 0,#b8cce6 45%,#9cb3d3 50%,#a5bcd9 100%);border:1px solid #56688a;border-radius:3px"></div><svg class="a" style="left:1257.0px;top:215.0px" width="20" height="18"><rect x="3" y="2" width="15" height="13" fill="#f6f6f6" stroke="#3a4658" stroke-width="1"/><rect x="6.5" y="5.5" width="8" height="6" fill="#9cb3d3" stroke="#3a4658" stroke-width="1"/></svg>
<div class="a" style="left:1290px;top:212px;width:42px;height:24px;background:linear-gradient(#e9a898 0,#dc8c78 45%,#c4482c 50%,#cc5a40 100%);border:1px solid #5a1a1a;border-radius:3px"></div><svg class="a" style="left:1301.0px;top:215.0px" width="20" height="18"><path d="M2 4 L6 1 L10 5 L14 1 L18 4 L14 9 L18 14 L14 17 L10 13 L6 17 L2 14 L6 9Z" fill="#f6f6f6" stroke="#3a4658" stroke-width="1" stroke-linejoin="round"/></svg>
<div class="a" style="left:521px;top:239px;width:813px;height:639px;background:#f0f0f0;border-left:1px solid #a0a0a0;border-bottom:1px solid #ffffff;border-right:1px solid #a0a0a0;border-top:1px solid #ffffff"></div>
<div class="a" style="left:521px;top:239px;width:1px;height:43px;background:#ffffff"></div>
<div class="a" style="left:572px;top:245px;width:147px;height:29px;background:#e1e1e1;border:1px solid #adadad;"></div>
<div class="t" style="left:620.5px;top:253.55px;font-size:14px;color:#e01010;font-weight:bold">?</div>
<div class="t" style="left:628px;top:253.55px;font-size:14px;color:#1a4ad8">{</div>
<div class="a" style="left:634px;top:253px;width:3px;height:14px;background:repeating-linear-gradient(#000 0 2px,#e1e1e1 2px 3px)"></div>
<div class="t" style="left:640.8px;top:253.97px;font-size:13.5px;">Di<u>z</u>in</div>
<svg class="a" style="left:729px;top:246px" width="16" height="32"><circle cx="7.5" cy="7.5" r="6.3" fill="#fff" stroke="#8a8a8a" stroke-width="1"/><circle cx="7.5" cy="7.5" r="3" fill="#000"/><circle cx="7.5" cy="23.5" r="6.3" fill="#fff" stroke="#a8a8a8" stroke-width="1"/></svg>
<div class="t" style="left:750px;top:247.37px;font-size:13.5px;">Dosya No</div>
<div class="t" style="left:750px;top:263.37px;font-size:13.5px;">Beyanname No</div>
<div class="t" style="left:861px;top:254.77px;font-size:13.5px;">Dosya No <u>A</u>ra</div>
<div class="a" style="left:950px;top:247px;width:115px;height:24px;background:#fff;border:1px solid #7a7a7a;border-color:#7a7a7a"></div>
<div class="a" style="left:1071px;top:245px;width:79px;height:29px;background:#e5e5e5;border:2px solid #0078d7"></div>
<svg class="a" style="left:1078px;top:251px" width="18" height="18"><circle cx="11" cy="7" r="5" fill="#dff0ff" stroke="#3a78b8" stroke-width="1.5"/><path d="M7.5 10.5 L2 16" stroke="#e08020" stroke-width="2.6" stroke-linecap="round"/></svg>
<div class="t" style="left:1104px;top:255.37px;font-size:13.5px;"><u>A</u>ra</div>
<div class="a" style="left:1235px;top:247px;width:1px;height:26px;background:#a0a0a0"></div>
<div class="a" style="left:1247px;top:245px;width:68px;height:29px;background:#e1e1e1;border:1px solid #adadad;"></div>
<svg class="a" style="left:1261px;top:251px" width="18" height="18"><circle cx="9" cy="9" r="8" fill="#d0d0d0" stroke="#707070"/><circle cx="9" cy="9" r="5.5" fill="#3aa83a"/><path d="M5 9 A4 4 0 0 1 13 9" stroke="#fff" stroke-width="1.6" fill="none"/></svg>
<div class="t" style="left:1282px;top:252.77px;font-size:13.5px;">Log</div>
<svg class="a" style="left:1301px;top:239px" width="33" height="33"><rect x="0.5" y="0.5" width="32" height="32" fill="#8434a8" stroke="#000"/><path d="M26.5 1 V32" stroke="#b58ad0" stroke-width="1"/><path d="M4 7.5 C6.5 2 19.5 1.5 19.5 9 C19.5 15 10.5 15.5 10.5 22.5" stroke="#f2f2f2" stroke-width="6" fill="none"/><circle cx="10.3" cy="28.6" r="3.6" fill="#f2f2f2"/></svg>
<div class="a" style="left:522px;top:281px;width:812px;height:1px;background:#a0a0a0"></div>
<div class="a" style="left:522px;top:282px;width:812px;height:1px;background:#ffffff"></div>
<div class="t" style="left:527px;top:286.87px;font-size:13.5px;">Dosya No</div>
<div class="t" style="left:619px;top:286.87px;font-size:13.5px;">Alıcı</div>
<div class="t" style="left:739px;top:286.87px;font-size:13.5px;">Gönderen</div>
<div class="t" style="left:859px;top:286.87px;font-size:13.5px;">Gümrük</div>
<div class="t" style="left:980px;top:286.87px;font-size:13.5px;">Kullanıcı</div>
<div class="t" style="left:1040px;top:286.87px;font-size:13.5px;">Kur Tarihi</div>
<div class="t" style="left:1134px;top:286.87px;font-size:13.5px;">Müş.Tem</div>
<div class="a" style="left:528px;top:302px;width:88px;height:22px;background:#808080"></div>
<div class="a" style="left:620px;top:302px;width:116px;height:22px;background:#808080"></div>
<div class="a" style="left:860px;top:302px;width:116px;height:22px;background:#808080"></div>
<div class="a" style="left:980px;top:302px;width:56px;height:22px;background:#808080"></div>
<div class="a" style="left:1040px;top:302px;width:91px;height:22px;background:#808080"></div>
<div class="a" style="left:1135px;top:302px;width:96px;height:22px;background:#808080"></div>
<div class="a" style="left:740px;top:302px;width:116px;height:22px;background:#0078d7;border:1px solid #c07030"></div>
<div class="t" style="left:530.4px;top:305.25px;font-size:14px;font-weight:bold;color:#ffff00;letter-spacing:0.15px">26-05430</div>
<div class="a" style="left:620px;top:302px;width:116px;height:22px;overflow:hidden"><div class="t" style="left:2.3px;top:3.25px;font-size:14px;font-weight:bold;color:#ffff00;letter-spacing:0.15px">EVRİM YAZILIM '</div></div>
<div class="a" style="left:740px;top:302px;width:116px;height:22px;overflow:hidden"><div class="t" style="left:1.5px;top:3.07px;font-size:13.5px;color:#fff;letter-spacing:0.95px">URTDIŞI FİRMA</div></div>
<div class="a" style="left:860px;top:302px;width:116px;height:22px;overflow:hidden"><div class="t" style="left:2.3px;top:3.25px;font-size:14px;font-weight:bold;color:#ffff00;letter-spacing:0.15px">MURATBEY GÜMRÜK</div></div>
<div class="t" style="left:1042px;top:305.15px;font-size:14px;font-weight:bold;color:#ffff00;letter-spacing:0.15px">01.04.2026</div>
<div class="t" style="left:526px;top:329.17px;font-size:13.5px;">Fatura Bedeli</div>
<div class="t" style="left:666px;top:329.17px;font-size:13.5px;">Kap Adedi</div>
<div class="t" style="left:739px;top:329.17px;font-size:13.5px;">Brüt Kilo</div>
<div class="t" style="left:794px;top:329.17px;font-size:13.5px;">Net Kilo</div>
<div class="t" style="left:859px;top:329.17px;font-size:13.5px;">Bulunduğu Yer</div>
<div class="t" style="left:980px;top:329.17px;font-size:13.5px;">Müşteri Temsilcisi</div>
<div class="t" style="left:1095px;top:329.17px;font-size:13.5px;">Referans</div>
<div class="a" style="left:527px;top:346px;width:92px;height:22px;background:#808080"></div>
<div class="a" style="left:622px;top:346px;width:41px;height:22px;background:#808080"></div>
<div class="a" style="left:666px;top:346px;width:70px;height:22px;background:#808080"></div>
<div class="a" style="left:740px;top:346px;width:51px;height:22px;background:#808080"></div>
<div class="a" style="left:795px;top:346px;width:60px;height:22px;background:#808080"></div>
<div class="a" style="left:859px;top:346px;width:117px;height:22px;background:#808080"></div>
<div class="a" style="left:981px;top:346px;width:110px;height:22px;background:#808080"></div>
<div class="a" style="left:1096px;top:346px;width:135px;height:22px;background:#808080"></div>
<div class="t" style="right:1004px;top:349.45px;font-size:14px;font-weight:bold;color:#ffff00;letter-spacing:0.15px">7.329.480,26</div>
<div class="t" style="left:625.4px;top:349.45px;font-size:14px;font-weight:bold;color:#ffff00;letter-spacing:0.15px">TL</div>
<div class="t" style="left:668.6px;top:349.45px;font-size:14px;font-weight:bold;color:#ffff00;letter-spacing:0.15px">1144</div>
<div class="t" style="right:830.5px;top:349.45px;font-size:14px;font-weight:bold;color:#ffff00;letter-spacing:0.15px">7.530</div>
<div class="t" style="right:766.5px;top:349.45px;font-size:14px;font-weight:bold;color:#ffff00;letter-spacing:0.15px">6.529,9</div>
<div class="t" style="left:862px;top:349.45px;font-size:14px;font-weight:bold;color:#ffff00;letter-spacing:0.15px">A34000058</div>
<div class="t" style="left:1098px;top:349.75px;font-size:14px;font-weight:bold;color:#ffff00;letter-spacing:0.15px;letter-spacing:-0.6px">LCN1775HAL2-ÇAL</div>
<div class="t" style="left:526px;top:374.07px;font-size:13.5px;">ÖB Süre Sonu</div>
<div class="t" style="left:626px;top:374.07px;font-size:13.5px;">Statü</div>
<div class="a" style="left:527px;top:392px;width:92px;height:21px;background:#808080"></div>
<div class="a" style="left:627px;top:392px;width:229px;height:21px;background:#808080"></div>
<div class="a" style="left:522px;top:421px;width:812px;height:1px;background:#a0a0a0"></div>
<div class="a" style="left:522px;top:422px;width:812px;height:1px;background:#ffffff"></div>
<div class="a" style="left:525px;top:431px;width:139px;height:66px;border:1px solid #dadada;box-shadow:inset 1px 1px 0 #fff"></div>
<div class="a" style="left:664px;top:431px;width:182px;height:66px;border:1px solid #dadada;box-shadow:inset 1px 1px 0 #fff"></div>
<div class="a" style="left:846px;top:431px;width:238px;height:66px;border:1px solid #dadada;box-shadow:inset 1px 1px 0 #fff"></div>
<div class="a" style="left:1084px;top:431px;width:156px;height:66px;border:1px solid #dadada;box-shadow:inset 1px 1px 0 #fff"></div>
<div class="t" style="left:533px;top:424.87px;font-size:13.5px;background:#f0f0f0;padding:0 2px;margin-left:-2px">Beyanname</div>
<div class="t" style="left:672px;top:424.87px;font-size:13.5px;background:#f0f0f0;padding:0 2px;margin-left:-2px">Tarih</div>
<div class="t" style="left:853.8px;top:424.87px;font-size:13.5px;background:#f0f0f0;padding:0 2px;margin-left:-2px">No</div>
<div class="t" style="left:1092px;top:424.87px;font-size:13.5px;background:#f0f0f0;padding:0 2px;margin-left:-2px">Başlangıç Tarihi</div>
<div class="t" style="left:528px;top:445.07px;font-size:13.5px;">Tarihi</div>
<div class="t" style="right:1059px;top:470.57px;font-size:13.5px;">No</div>
<div class="a" style="left:566px;top:439px;width:94px;height:22px;background:#808080"></div>
<div class="a" style="left:566px;top:466px;width:94px;height:21px;background:#808080"></div>
<div class="t" style="right:888px;top:445.07px;font-size:13.5px;">Kapanış</div>
<div class="t" style="left:666px;top:470.57px;font-size:13.5px;">Mal Teslim</div>
<div class="a" style="left:736px;top:439px;width:106px;height:22px;background:#fff;border:1px solid #7a7a7a;border-color:#a0a0a0"></div><div class="a" style="left:821px;top:441px;width:19px;height:18px;background:#f0f0f0"></div><svg class="a" style="left:824.5px;top:447.0px" width="12" height="7"><path d="M1 1 H11 L6 6Z" fill="#000"/></svg>
<div class="a" style="left:736px;top:466px;width:106px;height:21px;background:#fff;border:1px solid #7a7a7a;border-color:#a0a0a0"></div><div class="a" style="left:821px;top:468px;width:19px;height:17px;background:#f0f0f0"></div><svg class="a" style="left:824.5px;top:473.5px" width="12" height="7"><path d="M1 1 H11 L6 6Z" fill="#000"/></svg>
<div class="t" style="left:849px;top:445.07px;font-size:13.5px;">Konişmento</div>
<div class="t" style="right:701px;top:470.57px;font-size:13.5px;">House</div>
<div class="a" style="left:923px;top:439px;width:147px;height:22px;background:#fff;border:1px solid #7a7a7a;border-color:#a0a0a0"></div>
<div class="a" style="left:923px;top:466px;width:147px;height:21px;background:#fff;border:1px solid #7a7a7a;border-color:#a0a0a0"></div>
<div class="t" style="left:927px;top:468.84px;font-size:12px;">-</div>
<div class="t" style="right:490px;top:445.07px;font-size:13.5px;">İşlem</div>
<div class="t" style="left:1085px;top:470.57px;font-size:13.5px;">Operas</div>
<div class="a" style="left:1131px;top:439px;width:106px;height:22px;background:#fff;border:1px solid #7a7a7a;border-color:#a0a0a0"></div><div class="a" style="left:1216px;top:441px;width:19px;height:18px;background:#f0f0f0"></div><svg class="a" style="left:1219.5px;top:447.0px" width="12" height="7"><path d="M1 1 H11 L6 6Z" fill="#000"/></svg>
<div class="a" style="left:1131px;top:466px;width:106px;height:21px;background:#fff;border:1px solid #7a7a7a;border-color:#a0a0a0"></div><div class="a" style="left:1216px;top:468px;width:19px;height:17px;background:#f0f0f0"></div><svg class="a" style="left:1219.5px;top:473.5px" width="12" height="7"><path d="M1 1 H11 L6 6Z" fill="#000"/></svg>
<div class="a" style="left:661px;top:463px;width:186px;height:29px;border:3px solid #ff0000;border-radius:2px"></div>
<div class="t" style="left:527px;top:509.37px;font-size:13.5px;">İş Takip</div>
<div class="a" style="left:578px;top:503px;width:61px;height:23px;background:#fff;border:1px solid #7a7a7a;border-color:#a0a0a0"></div>
<div class="t" style="left:581px;top:507.62px;font-size:12.5px;">01</div>
<svg class="a" style="left:616px;top:505px" width="20" height="20"><rect x="0" y="0" width="20" height="20" fill="#e8e8e8"/><rect x="4" y="2" width="12" height="16" fill="#cfe0f8" stroke="#5a78c8" stroke-width="1"/><path d="M6 6 H14 M6 14 H14" stroke="#8aa6e0" stroke-width="1"/><rect x="1" y="9" width="18" height="2.5" fill="#2a4aa8"/></svg>
<div class="a" style="left:642px;top:503px;width:94px;height:23px;background:#808080"></div>
<div class="t" style="left:645px;top:506.25px;font-size:14px;font-weight:bold;color:#ffff00;letter-spacing:0.15px">Normal</div>
<div class="t" style="left:749px;top:509.37px;font-size:13.5px;">İş Takip Not</div>
<div class="a" style="left:826px;top:503px;width:409px;height:22px;background:#fff;border:1px solid #7a7a7a;border-color:#a0a0a0"></div>
<div class="t" style="left:527px;top:538.97px;font-size:13.5px;">TSE No</div>
<div class="a" style="left:578px;top:534px;width:157px;height:22px;background:#808080"></div>
<div class="t" style="left:736px;top:538.97px;font-size:13.5px;">Vergi Öd. Türü</div>
<div class="a" style="left:826px;top:534px;width:89px;height:22px;background:#fff;border:1px solid #7a7a7a;border-color:#a0a0a0"></div>
<div class="a" style="left:522px;top:563px;width:812px;height:1px;background:#ffffff"></div>
<div class="a" style="left:522px;top:565px;width:812px;height:247px;background:#ffffff"></div>
<div class="a" style="left:522px;top:565px;width:811px;height:24px;overflow:hidden;background:#f0f0f0"><div class="a" style="left:0px;top:0px;width:15px;height:24px;border:1px solid #000;box-shadow:inset 1px 1px 0 #fff,inset -1px -1px 0 #fff"></div><div class="a" style="left:14px;top:0px;width:54px;height:24px;border:1px solid #000;box-shadow:inset 1px 1px 0 #fff,inset -1px -1px 0 #fff"></div><div class="a" style="left:67px;top:0px;width:391px;height:24px;border:1px solid #000;box-shadow:inset 1px 1px 0 #fff,inset -1px -1px 0 #fff"></div><div class="a" style="left:457px;top:0px;width:140px;height:24px;border:1px solid #000;box-shadow:inset 1px 1px 0 #fff,inset -1px -1px 0 #fff"></div><div class="a" style="left:596px;top:0px;width:114px;height:24px;border:1px solid #000;box-shadow:inset 1px 1px 0 #fff,inset -1px -1px 0 #fff"></div><div class="a" style="left:709px;top:0px;width:82px;height:24px;border:1px solid #000;box-shadow:inset 1px 1px 0 #fff,inset -1px -1px 0 #fff"></div><div class="a" style="left:790px;top:0px;width:89px;height:24px;border:1px solid #000;box-shadow:inset 1px 1px 0 #fff,inset -1px -1px 0 #fff"></div></div>
<div class="t" style="left:540px;top:571.07px;font-size:13.5px;">Kod</div>
<div class="t" style="left:593.5px;top:571.07px;font-size:13.5px;">Açıklama</div>
<div class="t" style="left:983px;top:571.07px;font-size:13.5px;">Tarih ve Saat</div>
<div class="t" style="left:1122px;top:571.07px;font-size:13.5px;">Komisyon No</div>
<div class="t" style="left:1235px;top:571.07px;font-size:13.5px;">Kullanıcı</div>
<div class="t" style="left:1316px;top:571.07px;font-size:13.5px;">No</div>
<div class="t" style="left:634.5px;width:600px;text-align:center;top:693.00px;font-size:13px;color:#6a6a6a">&lt;Gösterilecek kayıt yok&gt;</div>
<div class="a" style="left:522px;top:812px;width:812px;height:21px;background:repeating-conic-gradient(#f4f4f4 0 25%,#e6e6e6 0 50%) 0 0/2px 2px"></div>
<div class="a" style="left:522px;top:812px;width:21px;height:21px;background:#f0f0f0;border:1px solid #000;box-shadow:inset 1px 1px 0 #fff,inset -1px -1px 0 #fff"></div>
<svg class="a" style="left:528px;top:816px" width="9" height="13"><path d="M7 1 L1 6.5 L7 12Z" fill="#000"/></svg>
<div class="a" style="left:543px;top:812px;width:234px;height:21px;background:#f0f0f0;border:1px solid #000;box-shadow:inset 1px 1px 0 #fff,inset -1px -1px 0 #fff"></div>
<div class="a" style="left:1312px;top:812px;width:22px;height:21px;background:#f0f0f0;border:1px solid #000;box-shadow:inset 1px 1px 0 #fff,inset -1px -1px 0 #fff"></div>
<svg class="a" style="left:1319px;top:816px" width="9" height="13"><path d="M2 1 L8 6.5 L2 12Z" fill="#000"/></svg>
<div class="a" style="left:522px;top:833px;width:812px;height:1px;background:#a0a0a0"></div>
<div class="a" style="left:528px;top:841px;width:183px;height:32px;background:#e1e1e1;border:1px solid #adadad;"></div>
<svg class="a" style="left:566px;top:843px" width="28" height="28"><defs><linearGradient id="dg" x1="0" y1="0" x2="1" y2="1"><stop offset="0.35" stop-color="#ffffff"/><stop offset="1" stop-color="#7ec0ea"/></linearGradient><linearGradient id="pg" x1="0" y1="0" x2="1" y2="1"><stop offset="0" stop-color="#b8b8f8"/><stop offset="1" stop-color="#6a6ac8"/></linearGradient></defs><path d="M3.5 3.5 H17 L21.5 8 V24.5 H3.5Z" fill="url(#dg)" stroke="#5a6ad0" stroke-width="1.2"/><path d="M17 3.5 V8 H21.5Z" fill="#6ab0f0"/><path d="M11.5 17.5 L23 6 L26 9 L14.5 20.5Z" fill="url(#pg)" stroke="#3a3a90" stroke-width="0.8"/><path d="M11.5 17.5 L14.5 20.5 L8 22Z" fill="#d89020"/><path d="M8 22 L9 20 L10 21Z" fill="#000"/><path d="M23 6 L24.5 4.5 L27.5 7.5 L26 9Z" fill="#f0b000"/><circle cx="27" cy="4.5" r="2.6" fill="#d82a10"/></svg>
<div class="t" style="left:597px;top:850.37px;font-size:13.5px;">Ek<u>l</u>eDeğiştir</div>
<div class="a" style="left:736px;top:841px;width:84px;height:32px;background:#e1e1e1;border:1px solid #adadad;background:#cccccc;border-color:#c4c4c4"></div>
<div class="t" style="left:768px;top:850.37px;font-size:13.5px;color:#8c8c8c"><u>T</u>amam</div>
<div class="a" style="left:824px;top:841px;width:85px;height:32px;background:#e1e1e1;border:1px solid #adadad;background:#cccccc;border-color:#c4c4c4"></div>
<div class="t" style="left:871px;top:850.37px;font-size:13.5px;color:#8c8c8c">İptal</div>
<div class="a" style="left:983px;top:841px;width:92px;height:32px;background:#e1e1e1;border:1px solid #adadad;"></div>
<svg class="a" style="left:990px;top:846px" width="28" height="23"><g fill="#000"><rect x="0" y="1" width="1.5" height="16"/><rect x="2.5" y="1" width="1" height="16"/><rect x="4.5" y="1" width="1.5" height="16"/><rect x="7" y="1" width="1" height="16"/><rect x="8.5" y="1" width="2" height="16"/><rect x="11.5" y="1" width="1" height="16"/><rect x="13" y="1" width="1" height="16"/><rect x="15" y="1" width="1.5" height="16"/><rect x="17.5" y="1" width="1" height="16"/><rect x="19.5" y="1" width="2" height="16"/><rect x="22.5" y="1" width="1" height="16"/><rect x="24" y="1" width="1.5" height="16"/><rect x="26" y="1" width="1" height="16"/></g><text x="1.5" y="22" font-family="Liberation Sans" font-size="6" font-weight="bold" letter-spacing="0.6">712040</text></svg>
<div class="t" style="left:1021px;top:850.37px;font-size:13.5px;"><u>B</u>arkod</div>
<div class="a" style="left:1078px;top:841px;width:91px;height:32px;background:#e1e1e1;border:1px solid #adadad;"></div>
<svg class="a" style="left:1090px;top:844px" width="26" height="26"><path d="M6 1 L14 0 L17 10 L9 11Z" fill="#a8d4ff" stroke="#5a8ac8" stroke-width="0.8"/><path d="M1 14 L17 10 L24 15 L24 20 L9 24 L1 19Z" fill="#d4d4d4" stroke="#505050" stroke-width="1"/><path d="M1 14 L9 19 L24 15 M9 19 V24" stroke="#707070" fill="none"/><path d="M10 20 L22 17 V19 L10 22Z" fill="#202020"/></svg>
<div class="t" style="left:1119px;top:850.37px;font-size:13.5px;"><u>Y</u>azdır</div>
<div class="a" style="left:1171px;top:841px;width:91px;height:32px;background:#e1e1e1;border:1px solid #adadad;"></div>
<svg class="a" style="left:1186px;top:845px" width="21" height="25"><rect x="6.5" y="2.5" width="13" height="19" fill="#cff4ff" stroke="#4a4ab8"/><path d="M7 15 Q13 12 19 13 V21 H7Z" fill="#40b428"/><path d="M0.5 3 L8.5 0.5 V24.5 L0.5 22Z" fill="#5858d8" stroke="#2a2a90"/><circle cx="6" cy="12.5" r="1" fill="#fff"/></svg>
<div class="t" style="left:1212px;top:850.37px;font-size:13.5px;"><u>K</u>apat</div>
</body></html>
